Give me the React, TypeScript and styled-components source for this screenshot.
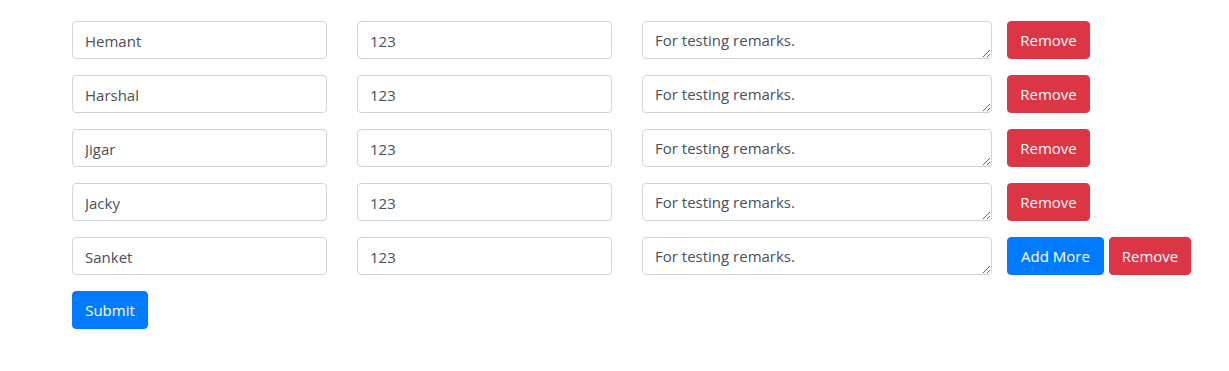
import React from "react";
import styled, { createGlobalStyle } from "styled-components";

const Global = createGlobalStyle`
  body {
    margin: 0;
    background: #fff;
    font-family: "Open Sans", "Noto Sans", sans-serif;
  }
  * { box-sizing: border-box; }
`;

const Page = styled.div`
  padding: 21px 0 0 72px;
  display: flex;
  flex-direction: column;
  gap: 16px;
`;

const Row = styled.div`
  display: flex;
  align-items: flex-start;
`;

const Field = styled.input<{ $w: number }>`
  width: ${(p) => p.$w}px;
  height: 38px;
  padding: 7px 12px 5px;
  font-family: "Open Sans", "Noto Sans", sans-serif;
  font-size: 15px;
  line-height: 24px;
  color: #495057;
  border: 1px solid #ced4da;
  border-radius: 4px;
  background: #fff;
  margin-right: 30px;
  outline: none;
`;

const Remarks = styled.textarea`
  width: 350px;
  height: 38px;
  padding: 6px 12px;
  font-family: "Open Sans", "Noto Sans", sans-serif;
  font-size: 15px;
  line-height: 24px;
  color: #495057;
  border: 1px solid #ced4da;
  border-radius: 4px;
  background: #fff;
  margin-right: 15px;
  resize: vertical;
  overflow: hidden;
  outline: none;
  display: block;
`;

const Actions = styled.div`
  display: flex;
  gap: 5px;
`;

const Button = styled.button<{ $variant: "primary" | "danger"; $w: number }>`
  width: ${(p) => p.$w}px;
  height: 38px;
  padding: 0;
  font-family: "Open Sans", "Noto Sans", sans-serif;
  font-size: 15px;
  color: #fff;
  border: 1px solid ${(p) => (p.$variant === "primary" ? "#007bff" : "#dc3545")};
  background: ${(p) => (p.$variant === "primary" ? "#007bff" : "#dc3545")};
  border-radius: 4px;
  cursor: pointer;
`;

const rows = ["Hemant", "Harshal", "Jigar", "Jacky", "Sanket"];

export default function App() {
  return (
    <>
      <Global />
      <Page>
        {rows.map((name, i) => (
          <Row key={name}>
            <Field $w={255} defaultValue={name} />
            <Field $w={255} defaultValue="123" />
            <Remarks defaultValue="For testing remarks." />
            <Actions>
              {i === rows.length - 1 && (
                <Button $variant="primary" $w={97}>Add More</Button>
              )}
              <Button $variant="danger" $w={i === rows.length - 1 ? 82 : 83}>Remove</Button>
            </Actions>
          </Row>
        ))}
        <Row>
          <Button $variant="primary" $w={76}>Submit</Button>
        </Row>
      </Page>
    </>
  );
}
